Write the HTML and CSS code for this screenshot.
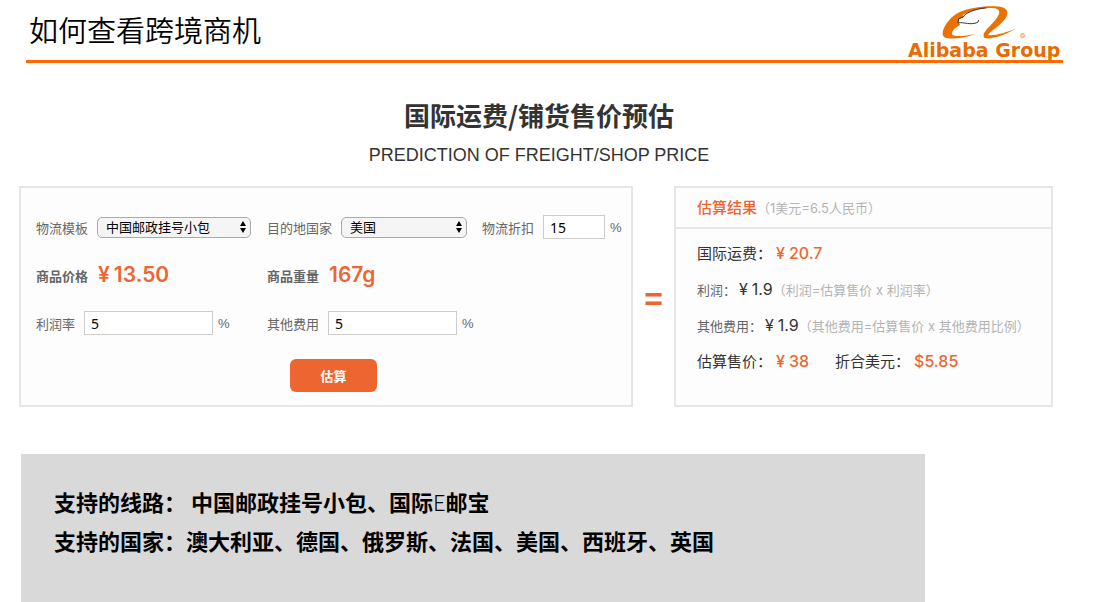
FILE: index.html
```html
<!DOCTYPE html>
<html lang="zh-CN">
<head>
<meta charset="utf-8">
<title>如何查看跨境商机</title>
<link rel="stylesheet" href="styles.css">
</head>
<body>
<header class="header">
  <h1 class="header-title">如何查看跨境商机</h1>
  <div class="logo">
    <svg class="logo-mark" viewBox="54 15 471 108" aria-hidden="true">
      <path fill="#ee7000" d="M257 103C226 114 184 121 166 113C150 103 166 70 190 49C220 24 276 17 318 18C354 18 364 34 350 55C334 79 302 93 297 106C321 108 350 99 382 86C350 106 302 122 286 114C276 102 298 84 314 66C331 47 342 28 316 24C284 20 244 31 222 44L221 52L209 56L206 68L213 74L196 85C186 97 183 106 198 108C215 110 236 106 257 103Z"/>
      <path fill="none" stroke="#333" stroke-width="3" d="M292 23C256 26 225 40 222 51L208 56L206 69C226 65 242 77 266 67L269 60"/>
      <circle cx="402" cy="107" r="6" fill="#fbd9bd" stroke="#f3a15c" stroke-width="3"/>
    </svg>
    <span class="logo-name">Alibaba Group</span>
  </div>
</header>
<main class="main">
  <h2 class="heading">国际运费/铺货售价预估</h2>
  <p class="subheading">PREDICTION OF FREIGHT/SHOP PRICE</p>
  <div class="estimate">
    <form class="panel form">
      <div class="field">
        <label for="template">物流模板</label>
        <span class="select select-wide">
          <select id="template"><option>中国邮政挂号小包</option></select>
          <svg class="arrows" viewBox="0 0 8 12" aria-hidden="true"><path d="M4 0L7 5H1ZM4 12L1 7H7Z"/></svg>
        </span>
      </div>
      <div class="field">
        <label for="country">目的地国家</label>
        <span class="select">
          <select id="country"><option>美国</option></select>
          <svg class="arrows" viewBox="0 0 8 12" aria-hidden="true"><path d="M4 0L7 5H1ZM4 12L1 7H7Z"/></svg>
        </span>
      </div>
      <div class="field">
        <label for="discount">物流折扣</label>
        <input class="input input-short" id="discount" type="text" value="15"><span class="unit">%</span>
      </div>
      <div class="field field-start strong"><span>商品价格</span><b class="figure"><span class="yen">¥</span>13.50</b></div>
      <div class="field strong"><span>商品重量</span><b class="figure">167g</b></div>
      <div class="field field-start">
        <label for="profit">利润率</label>
        <input class="input" id="profit" type="text" value="5"><span class="unit">%</span>
      </div>
      <div class="field">
        <label for="other">其他费用</label>
        <input class="input" id="other" type="text" value="5"><span class="unit">%</span>
      </div>
      <button class="submit" type="button">估算</button>
    </form>
    <div class="equals">=</div>
    <section class="panel result">
      <h3 class="result-head">估算结果<small class="note">（1美元=6.5人民币）</small></h3>
      <div class="result-body">
        <p class="line">国际运费：<span class="accent"><span class="yen">¥</span>20.7</span></p>
        <p class="line"><span class="minor">利润：</span><span class="amount"><span class="yen">¥</span>1.9</span><small class="note">（利润=估算售价 x 利润率）</small></p>
        <p class="line"><span class="minor">其他费用：</span><span class="amount"><span class="yen">¥</span>1.9</span><small class="note">（其他费用=估算售价 x 其他费用比例）</small></p>
        <p class="line"><span>估算售价：</span><span class="accent"><span class="yen">¥</span>38</span><span class="second">折合美元：</span><span class="accent">$5.85</span></p>
      </div>
    </section>
  </div>
</main>
<footer class="support">
  <p>支持的线路： 中国邮政挂号小包、国际<span class="thin">E</span>邮宝</p>
  <p>支持的国家：澳大利亚、德国、俄罗斯、法国、美国、西班牙、英国</p>
</footer>
</body>
</html>
```

FILE: styles.css
```css
* { box-sizing: border-box; }
h1, h2, h3, p { margin: 0; }
body {
  margin: 0;
  min-height: 100vh;
  display: flex;
  flex-direction: column;
  background: #fff;
  color: #333;
  font-family: "Liberation Sans", "Noto Sans CJK SC", sans-serif;
  font-size: 13px;
}
.header {
  display: flex;
  justify-content: space-between;
  align-items: flex-start;
  height: 63px;
  margin: 0 39px 0 26px;
  padding-left: 3px;
  border-bottom: 3px solid #ff6a00;
}
.header-title {
  padding-top: 7px;
  color: #000;
  font-family: "Noto Sans CJK SC", sans-serif;
  font-size: 29px;
  line-height: 44px;
  font-weight: 350;
}
.logo { padding-top: 5px; width: 155px; }
.logo-mark { display: block; width: 155px; height: 36px; }
.logo-name {
  display: block;
  color: #e86c00;
  font-family: "DejaVu Sans", sans-serif;
  font-size: 19px;
  line-height: 18px;
  font-weight: bold;
  white-space: nowrap;
}
.main { padding: 32px 49px 0 19px; }
.heading {
  padding-left: 6px;
  font-family: "Noto Sans CJK SC", sans-serif;
  font-size: 26px;
  line-height: 40px;
  text-align: center;
}
.subheading {
  padding: 4px 0 0 6px;
  margin-bottom: 15px;
  font-size: 18px;
  line-height: 32px;
  text-align: center;
}
.estimate { display: grid; grid-template-columns: 614fr 41px 379fr; }
.panel { min-height: 221px; border: 2px solid #e6e6e6; background: #fdfdfd; }
.form {
  display: grid;
  grid-template-columns: 231px 215px 1fr;
  grid-template-rows: 48px 48px 48px auto;
  align-items: center;
  align-content: start;
  padding: 15px 0 0 15px;
  color: #666;
}
.field { display: flex; align-items: center; gap: 9px; white-space: nowrap; }
.field-start { grid-column: 1; }
.strong { font-weight: bold; }
.figure { margin-left: 1px; color: #ed6631; font-family: Inter, sans-serif; font-size: 21px; line-height: 24px; font-weight: 600; }
.yen { margin-right: 4px; }
.select { position: relative; width: 126px; }
.select-wide { width: 154px; }
.select select {
  display: block;
  appearance: none;
  width: 100%;
  height: 21px;
  padding: 0 8px;
  border: 1px solid #aaa;
  border-radius: 5px;
  background: #f5f5f5;
  color: #000;
  font: 13px/19px "Liberation Sans", "Noto Sans CJK SC", sans-serif;
}
.arrows { position: absolute; right: 4px; top: 4px; width: 8px; height: 12px; fill: #000; pointer-events: none; }
.input {
  width: 129px;
  height: 24px;
  padding: 0 6px;
  border: 1px solid #ccc;
  background: #fff;
  color: #000;
  font: 14px/20px "Noto Sans", sans-serif;
}
.input-short { width: 62px; }
.unit { margin-left: -4px; }
.submit {
  grid-column: 1 / -1;
  justify-self: center;
  width: 87px;
  height: 33px;
  margin: 12px 0 0;
  border: 0;
  border-radius: 6px;
  background: #ed6631;
  color: #fff;
  font: bold 13px/20px "Noto Sans CJK SC", sans-serif;
}
.equals { align-self: center; padding-top: 4px; color: #ed6631; font-size: 32px; line-height: 36px; font-weight: bold; text-align: center; }
.result { font-family: Inter, "Noto Sans CJK SC", sans-serif; }
.result-head {
  height: 41px;
  padding-left: 21px;
  border-bottom: 2px solid #e6e6e6;
  color: #ed6631;
  font-size: 15px;
  line-height: 39px;
  font-weight: 500;
}
.result-body { padding: 6px 0 0 21px; }
.line { height: 36px; font-size: 15px; line-height: 36px; white-space: nowrap; }
.minor { color: #666; font-size: 13px; }
.note { color: #b4b4b4; font-size: 13px; font-weight: normal; }
.accent { margin-left: 4px; color: #ed6631; font-size: 16px; font-weight: 500; }
.amount { margin-left: 3px; font-size: 16px; }
.second { margin-left: 26px; }
.support {
  flex: 1;
  width: 82%;
  margin: 47px 0 0 21px;
  padding: 28px 33px 0;
  background: #d9d9d9;
  color: #000;
  font-family: "Noto Sans CJK SC", sans-serif;
  font-size: 22px;
  line-height: 39px;
  font-weight: bold;
}
.thin { font-weight: 300; }
```
